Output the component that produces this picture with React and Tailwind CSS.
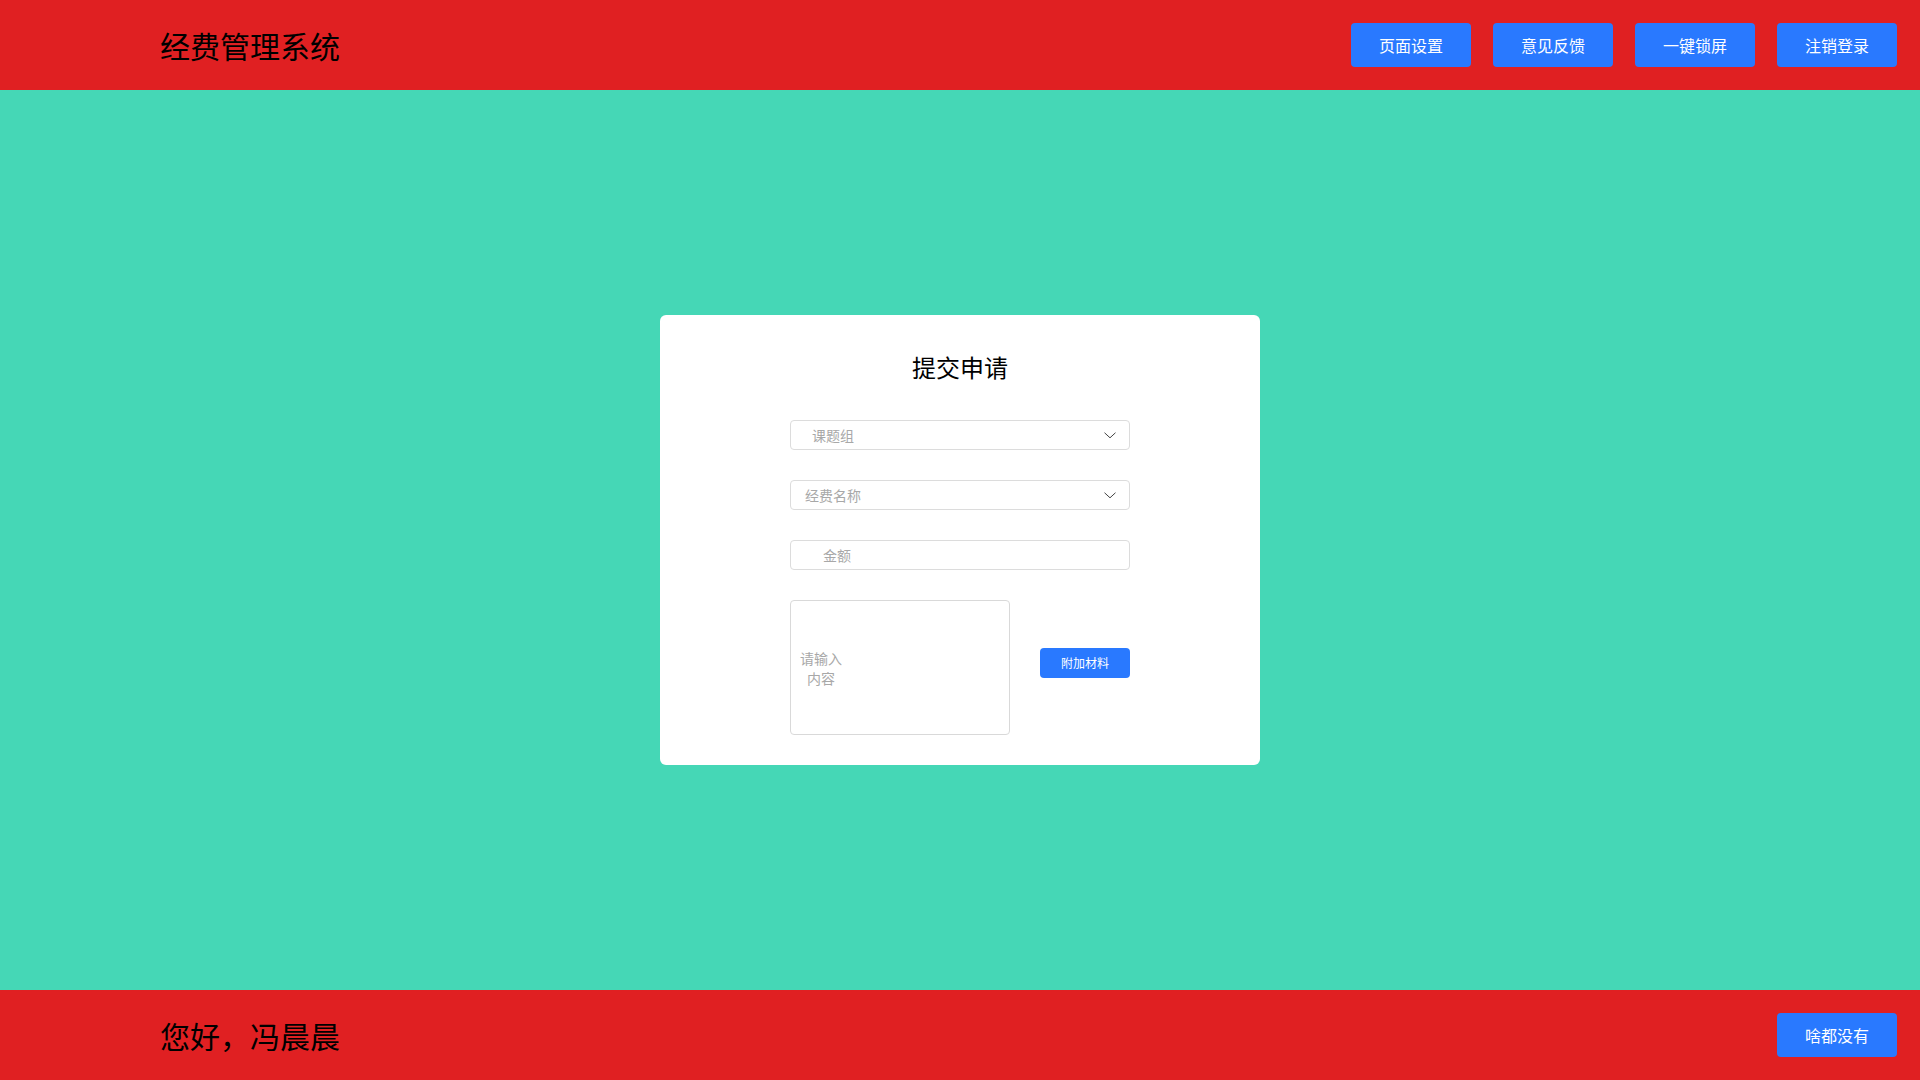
import React from "react";

const font = { fontFamily: '"Noto Sans CJK SC", "Noto Sans", sans-serif' };

function Chevron() {
  return (
    <svg width="12" height="7" viewBox="0 0 12 7" fill="none">
      <path d="M0.8 1 L6 5.8 L11.2 1" stroke="#444" strokeWidth="1" strokeLinecap="round" strokeLinejoin="round" />
    </svg>
  );
}

function HeaderButton({ children }) {
  return (
    <button className="w-[120px] h-[44px] rounded-[4px] bg-[#2979ff] text-white text-[16px] flex items-center justify-center">
      {children}
    </button>
  );
}

export default function App() {
  return (
    <div className="flex flex-col h-screen w-full" style={font}>
      <header className="h-[90px] shrink-0 bg-[#e02022] flex items-center justify-between pl-[160px] pr-[23px]">
        <h1 className="text-[30px] text-black leading-none">经费管理系统</h1>
        <div className="flex gap-[22px]">
          <HeaderButton>页面设置</HeaderButton>
          <HeaderButton>意见反馈</HeaderButton>
          <HeaderButton>一键锁屏</HeaderButton>
          <HeaderButton>注销登录</HeaderButton>
        </div>
      </header>

      <main className="flex-1 bg-[#45d7b6] flex items-center justify-center">
        <div className="w-[600px] h-[450px] bg-white rounded-[6px] flex flex-col items-center pt-[36px]">
          <h2 className="text-[24px] leading-8 text-black">提交申请</h2>

          <div className="mt-[37px] w-[340px] h-[30px] border border-[#dcdcdc] rounded-[4px] flex items-center justify-between pl-[21px] pr-[13px]">
            <span className="text-[14px] text-[#a8a8a8]">课题组</span>
            <Chevron />
          </div>

          <div className="mt-[30px] w-[340px] h-[30px] border border-[#dcdcdc] rounded-[4px] flex items-center justify-between pl-[14px] pr-[13px]">
            <span className="text-[14px] text-[#a8a8a8]">经费名称</span>
            <Chevron />
          </div>

          <div className="mt-[30px] w-[340px] h-[30px] border border-[#dcdcdc] rounded-[4px] flex items-center pl-[32px]">
            <span className="text-[14px] text-[#a8a8a8]">金额</span>
          </div>

          <div className="mt-[30px] w-[340px] flex items-start justify-between">
            <div className="w-[220px] h-[135px] border border-[#d9d9d9] rounded-[4px] flex items-center">
              <div className="ml-[8px] w-[44px] text-center text-[14px] leading-5 text-[#a8a8a8]">
                请输入内容
              </div>
            </div>
            <button className="mt-[48px] w-[90px] h-[30px] rounded-[4px] bg-[#2979ff] text-white text-[12px] flex items-center justify-center">
              附加材料
            </button>
          </div>
        </div>
      </main>

      <footer className="h-[90px] shrink-0 bg-[#e02022] flex items-center justify-between pl-[160px] pr-[23px]">
        <p className="text-[30px] text-black leading-none">您好，冯晨晨</p>
        <HeaderButton>啥都没有</HeaderButton>
      </footer>
    </div>
  );
}
